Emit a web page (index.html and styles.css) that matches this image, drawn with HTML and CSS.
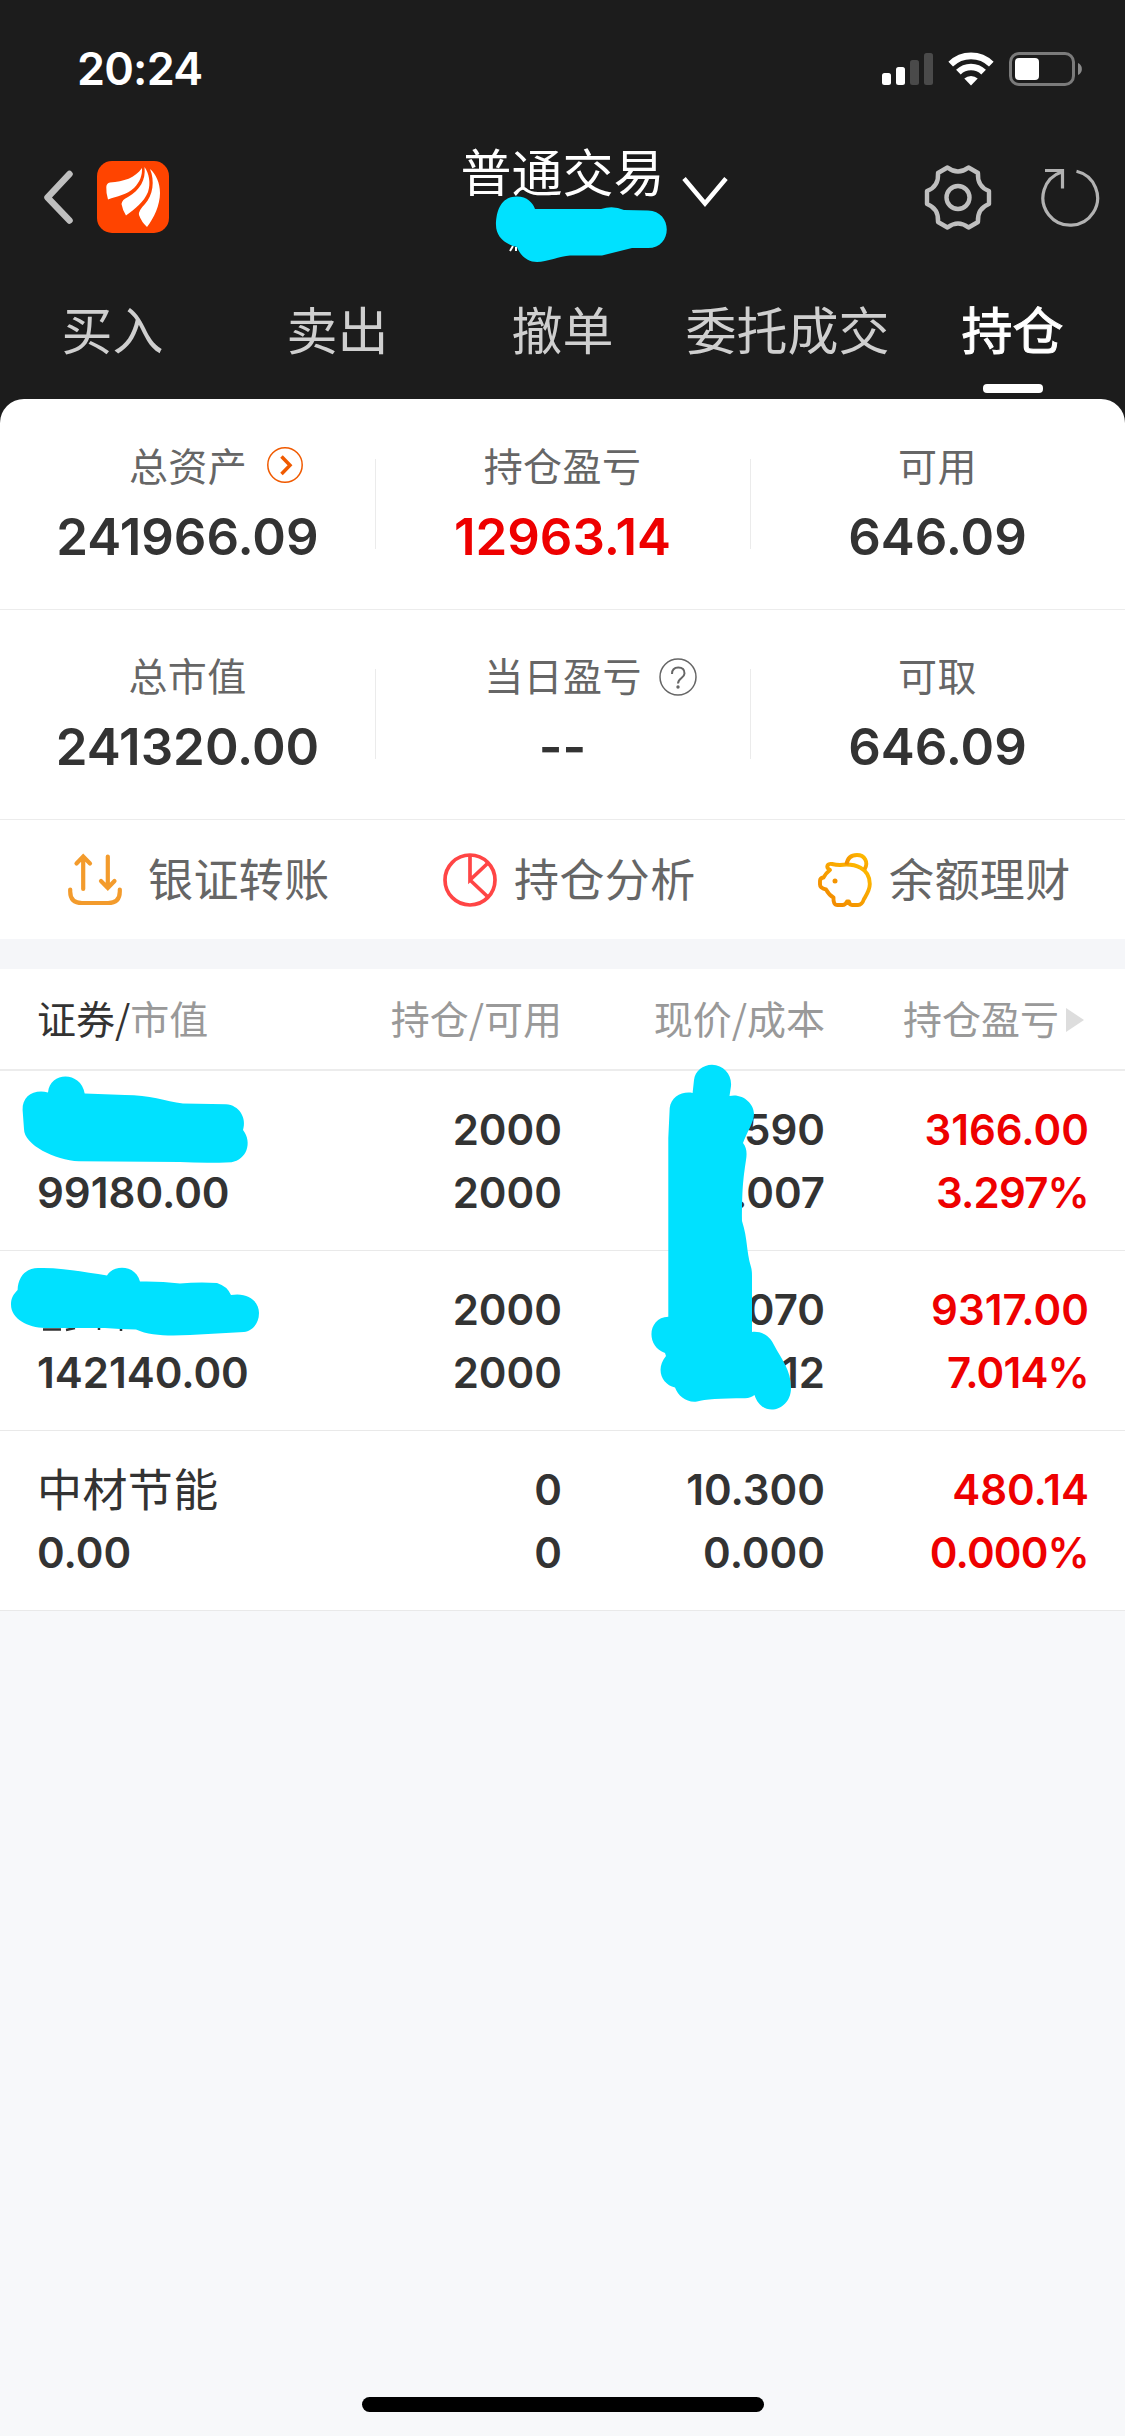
FILE: index.html
```html
<!DOCTYPE html>
<html lang="zh-CN">
<head>
    <meta charset="utf-8">
    <title>普通交易</title>
    <link rel="stylesheet" href="styles.css">
</head>

<body>
    <header>
        <div class="status">
            <div class="time">20:24</div>
            <svg class="signal" width="51" height="34" viewBox="0 0 51 34">
                <g fill="#fff">
                    <rect x="0" y="21" width="9" height="12" rx="2.5"/>
                    <rect x="14" y="15" width="9" height="18" rx="2.5"/>
                </g>
                <g fill="#4a4a4a">
                    <rect x="28" y="8" width="9" height="25" rx="2.5"/>
                    <rect x="42" y="1" width="9" height="32" rx="2.5"/>
                </g>
            </svg>
            <svg class="wifi" width="46" height="34" viewBox="0 0 46 34">
                <g fill="none" stroke="#fff" stroke-width="6.6">
                    <path d="M2.7 12.2a29 29 0 0 1 40.6 0"/>
                    <path d="M10.4 20.2a18 18 0 0 1 25.2 0"/>
                </g>
                <path d="M23 33.4l-6.7-6.8a9.6 9.6 0 0 1 13.4 0z" fill="#fff"/>
            </svg>
            <svg class="battery" width="74" height="34" viewBox="0 0 74 34">
                <rect x="1.5" y="1.5" width="63" height="31" rx="8.5" fill="none" stroke="#7b7b7b" stroke-width="3"/>
                <rect x="6" y="6" width="24" height="22" rx="4" fill="#fff"/>
                <path d="M69 11v12a6.6 6.6 0 0 0 0-12z" fill="#8a8a8a"/>
            </svg>
        </div>

        <div class="navbar">
            <div class="nav-left">
                <svg width="32" height="54" viewBox="0 0 32 54"><path d="M27.500 4L5.500 27.500l22 23" fill="none" stroke="#bfbfbf" stroke-width="6.500" stroke-linecap="round" stroke-linejoin="round"/></svg>
                <svg class="logo" width="72" height="72" viewBox="0 0 72 72">
                    <rect width="72" height="72" rx="15" fill="#ff4400"/>
                    <g fill="#fff">
                        <path d="M45 7C38 17 27 20.500 13 21.500Q9.500 22 9.300 26Q9 32 11 38.500C20 35 30 34 37 27C43 21 45.500 14 45 7z"/>
                        <path d="M47.500 6C49 19 43 29 31 36Q25 38.500 24.500 43Q25.500 49 29 54.500C38 48 47 41 51 31C54 22 52 12 47.500 6z"/>
                        <path d="M53 8C58 20 56 34 48 43Q41 50 42 54Q44.500 61 50 66C57 57 63 44 63 32C63 22 59 13 53 8z"/>
                    </g>
                </svg>
            </div>
            <div class="title">普通交易</div>
            <div class="nav-right">
                <svg class="arrow" width="46" height="32" viewBox="0 0 46 32"><path d="M2 2.500L23 27.500 44 2.500" fill="none" stroke="#fff" stroke-width="4.500"/></svg>
                <svg class="gear" width="68" height="68" viewBox="0 0 68 68">
                    <g fill="none" stroke="#bfbfbf" stroke-width="4.400" stroke-linejoin="round">
                        <path d="M23.500 4.500Q34 12.500 44.500 4.500L54 10Q53 23.500 65 28V41Q53 45.500 54 59L44.500 64.500Q34 56.500 23.500 64.500L14 59Q15 45.500 3 41V28Q15 23.500 14 10z"/>
                        <circle cx="34" cy="34.500" r="11.500"/>
                    </g>
                </svg>
                <svg class="refresh" width="60" height="64" viewBox="0 0 60 64">
                    <path d="M36.500 6.300A27.300 27.300 0 1 1 21.500 7M5 5.500H22.500V23.500" fill="none" stroke="#b2b2b2" stroke-width="3.200"/>
                </svg>
            </div>
        </div>

        <div class="tabs">
            <div>买入</div>
            <div>卖出</div>
            <div>撤单</div>
            <div>委托成交</div>
            <div class="active">持仓</div>
        </div>
    </header>

    <main>
        <section class="summary">
            <div class="cell">
                <div class="label">总资产<svg class="go" width="36" height="36" viewBox="0 0 36 36"><g fill="none" stroke="#f05a00"><circle cx="18" cy="18" r="17.200" stroke-width="1.500"/><path d="M14.500 9.500L23 18.300 14.500 27" stroke-width="3.500"/></g></svg></div>
                <div class="value">241966.09</div>
            </div>
            <div class="cell">
                <div class="label">持仓盈亏</div>
                <div class="value red">12963.14</div>
            </div>
            <div class="cell">
                <div class="label">可用</div>
                <div class="value">646.09</div>
            </div>
        </section>
        <section class="summary">
            <div class="cell">
                <div class="label">总市值</div>
                <div class="value">241320.00</div>
            </div>
            <div class="cell">
                <div class="label">当日盈亏<svg class="help" width="38" height="38" viewBox="0 0 38 38"><g fill="none" stroke="#666"><circle cx="19" cy="19" r="18" stroke-width="1.500"/><path d="M13 16Q13 9.500 19.300 9.500T25.500 15.500C25.500 20 19 20 19 25.500" stroke-width="2"/></g><circle cx="19" cy="29" r="1.700" fill="#666"/></svg></div>
                <div class="value">--</div>
            </div>
            <div class="cell">
                <div class="label">可取</div>
                <div class="value">646.09</div>
            </div>
        </section>

        <section class="actions">
            <div class="transfer">
                <svg width="54" height="54" viewBox="0 0 54 54">
                    <g fill="none" stroke="#f39b2c" stroke-width="4.200" stroke-linecap="round">
                        <path d="M2.200 36.500V38.500Q2.200 50 14 50H40Q51.800 50 51.800 38.500V36.500"/>
                        <path d="M15.200 36V4M8.500 10.500L15.200 3.500 22 10.500M39.800 3.500V35M33 28L39.800 35 46.500 28"/>
                    </g>
                </svg>
                <span>银证转账</span>
            </div>
            <div>
                <svg width="54" height="54" viewBox="0 0 54 54">
                    <g fill="none" stroke="#ff4545" stroke-width="3.700">
                        <circle cx="27" cy="27" r="25"/>
                        <path d="M27 2V27L45 10M27 27L45.500 44.500"/>
                    </g>
                </svg>
                <span>持仓分析</span>
            </div>
            <div>
                <svg width="54" height="54" viewBox="0 0 54 54">
                    <linearGradient id="pig" x1="0" y1="1" x2="1" y2="0">
                        <stop offset="0" stop-color="#f08300"/>
                        <stop offset="1" stop-color="#ffbe00"/>
                    </linearGradient>
                    <g fill="none" stroke="url(#pig)" stroke-width="3.900" stroke-linejoin="round">
                        <path d="M9.500 12.500Q10.500 10.500 14 11Q18 12 22 12C37 10 51.800 15 51.800 31C51.800 37 49 41 46 46Q44 52 40 52H34Q31.500 52 31 48.500H29Q27.500 52 24.500 52H19.500Q15 52 15.500 44.500Q11 42 8 36.500Q2 35 2 31.500V28Q2 25 5.500 24.500Q8 20 12 17Q8.500 15 9.500 12.500z"/>
                        <path d="M28.500 11.500C29.500 4.500 34 2 39 2C46.500 2 51 9 46.500 16.500"/>
                    </g>
                    <circle cx="17" cy="28" r="2.500" fill="#f49400"/>
                </svg>
                <span>余额理财</span>
            </div>
        </section>

        <section class="holdings">
            <div class="row head">
                <div><b>证券/</b>市值</div>
                <div>持仓/可用</div>
                <div>现价/成本</div>
                <div class="sort">持仓盈亏</div>
            </div>
            <div class="row">
                <div><p class="name"></p><p>99180.00</p></div>
                <div><p>2000</p><p>2000</p></div>
                <div><p>.590</p><p>.007</p></div>
                <div class="red"><p>3166.00</p><p class="percent">3.297%</p></div>
            </div>
            <div class="row">
                <div><p class="name"></p><p>142140.00</p></div>
                <div><p>2000</p><p>2000</p></div>
                <div><p>070</p><p>12</p></div>
                <div class="red"><p>9317.00</p><p class="percent">7.014%</p></div>
            </div>
            <div class="row">
                <div><p class="name">中材节能</p><p>0.00</p></div>
                <div><p>0</p><p>0</p></div>
                <div><p>10.300</p><p>0.000</p></div>
                <div class="red"><p>480.14</p><p class="percent">0.000%</p></div>
            </div>
        </section>
    </main>

    <div class="home-bar"></div>

    <!-- marker strokes over the private data -->
    <svg class="marker" width="1125" height="1420" viewBox="0 0 1125 1420">
        <path d="M513 246L510 251M516 247V251" stroke="#fff" stroke-width="2"/>
        <path d="M43 1329.500H61M66 1330L75 1328M99 1327V1330M121 1328V1331" stroke="#333" stroke-width="2.500"/>
        <g fill="#00e1ff">
            <path d="M496 225C496 213 500 196.500 517 196.500C527 196.500 533 203 535 209H601Q613 205 624 210L648 210.500C673 211 673 248 648 248H632L602 255.500H570C560 256 547 262 537 262C527 262 520 255 517 247C504 244 496 236 496 225z"/>
            <path d="M22.600 1110C22 1096 34 1089 48 1092.500C50 1071 81 1071 84.700 1093.500L125 1095C150 1095 165 1101 183 1103.600L226 1104.300C239 1105 247 1118 243 1130C253 1143 246 1160 231.600 1162.200Q205 1163.500 180 1162L79 1161.300C55 1160 24 1145 24 1129z"/>
            <path d="M17.600 1290C18 1275 28 1267 40 1268C60 1267.500 85 1272 107 1275.500C114 1264 136 1265 140 1281.500Q160 1281 180 1283.500Q198 1282 217 1283Q227 1286 231 1295C249 1292 259 1302 259 1313C259 1324 252 1331 244 1332L190 1335C170 1336 150 1336 136 1329.500Q120 1329 105 1328H45C28 1328 11 1319 11 1304.600C11 1298 13 1295 17.600 1290z"/>
            <path d="M712 1064.800C724 1065 732 1075 731 1086L729.500 1096C742 1093 754 1103 754 1114C754 1122 747 1132 743 1143C747 1148 747 1154 746 1160C743 1180 742 1190 742 1221C748 1240 746 1250 751 1267Q752 1270 752 1276V1332C762 1331 770 1336 774 1345C782 1360 791 1370 791 1388C791 1411 762 1419 754.500 1395Q751 1398 745 1398.200C720 1398.200 705 1399 697 1401.500C687 1403 678 1396 675 1387.500C662 1385 655 1369 666 1356L665 1353C645 1346 648 1317 668.300 1316.700V1138L669.700 1108C671 1097 682 1091 692.600 1093L694 1080C695 1071 703 1065 712 1064.800z"/>
        </g>
    </svg>
</body>
</html>
```
FILE: styles.css
```css
* {
    box-sizing: border-box;
}

body {
    position: relative;
    display: flex;
    flex-direction: column;
    height: 2436px;
    width: 1125px;
    margin: 0;
    background-color: #f7f8fa;
    font-family: Inter, "Noto Sans CJK SC", sans-serif;
    color: #333;
    overflow: hidden;
}

svg {
    display: block;
    flex: none;
}

p {
    margin: 0;
}

header {
    height: 424px;
    flex: none;
    background-color: #1c1c1c;
}

.status {
    display: flex;
    align-items: center;
    height: 137px;
    padding: 1px 42px 0 77px;
}

.time {
    font-size: 45px;
    font-weight: 600;
    letter-spacing: -0.8px;
    line-height: 56px;
    color: #fff;
    margin-right: auto;
}

.wifi {
    margin: 0 15px;
}

.navbar {
    display: grid;
    grid-template-columns: 1fr auto 1fr;
    height: 120px;
    align-items: center;
}

.nav-left {
    display: flex;
    align-items: center;
    gap: 23px;
    padding-left: 42px;
}

.title {
    font-size: 51px;
    line-height: 60px;
    margin-bottom: 54px;
    color: #fff;
    font-family: "Noto Sans CJK SC", sans-serif;
}

.nav-right {
    display: flex;
    align-items: center;
    padding-left: 17px;
}

.arrow {
    margin-top: -11px;
}

.gear {
    margin-left: 196px;
}

.refresh {
    margin-left: 48px;
}

.tabs {
    display: grid;
    grid-template-columns: repeat(5, 1fr);
    height: 142px;
    font-family: "Noto Sans CJK SC", sans-serif;
    font-size: 51px;
    line-height: 60px;
    padding-top: 41px;
    text-align: center;
    color: #cfcfcf;
}

/* a touch heavier than regular */
.tabs .active {
    color: #fff;
    -webkit-text-stroke: 1px #fff;
}

.tabs .active::after {
    content: "";
    display: block;
    width: 60px;
    height: 9px;
    margin: 26px auto 0;
    border-radius: 4px;
    background-color: #fff;
}

main {
    margin-top: -25px;
    border-radius: 24px 24px 0 0;
    background-color: #fff;
}

.summary {
    display: grid;
    grid-template-columns: repeat(3, 1fr);
    height: 211px;
    padding-top: 45px;
    border-bottom: 1px solid #ececec;
    text-align: center;
}

.summary + .summary {
    height: 210px;
    padding-top: 44px;
}

.cell {
    height: 120px;
}

.cell + .cell {
    background: linear-gradient(#ebebeb, #ebebeb) left 15px / 1px 90px no-repeat;
}

.label {
    display: flex;
    justify-content: center;
    align-items: center;
    height: 45px;
    margin-top: -3px;
    font-size: 39px;
    letter-spacing: 0.4px;
    color: #666;
}

.go {
    margin: 3px -57px 0 20px;
}

.help {
    margin: 6px -56px 0 17px;
}

.value {
    font-size: 51px;
    font-weight: 600;
    line-height: 60px;
    margin-top: 21px;
}

.red, .red p {
    color: #ee0000;
}

.actions {
    display: grid;
    grid-template-columns: repeat(3, 1fr);
    height: 119px;
    font-size: 45px;
    letter-spacing: 0.4px;
    color: #666;
}

.actions div {
    display: flex;
    align-items: center;
    gap: 17px;
    padding-left: 68px;
}

.actions .transfer {
    gap: 26px;
}

.actions span {
    margin-top: -5px;
}

.holdings {
    border-top: 30px solid #f5f6f9;
}

.row {
    display: grid;
    grid-template-columns: 325px 200px 263px 264px;
    height: 180px;
    padding: 27px 36px 0 37px;
    border-bottom: 1px solid #e9e9e9;
    text-align: right;
    font-size: 42px;
    font-weight: 600;
    line-height: 63px;
}

.row div:first-child {
    text-align: left;
}

.row .name {
    height: 63px;
    padding-top: 1px;
    font-size: 45px;
    font-weight: 400;
    letter-spacing: 0.4px;
}

.percent {
    letter-spacing: -0.8px;
}

.row.head {
    height: 102px;
    padding-top: 17px;
    border-bottom: 2px solid #ececec;
    font-size: 39px;
    font-weight: 400;
    color: #999;
    font-family: "Noto Sans CJK SC", sans-serif;
}

.head b {
    font-weight: 400;
    color: #333;
}

.sort {
    display: flex;
    justify-content: flex-end;
    align-items: center;
    height: 63px;
}

.sort::after {
    content: "";
    margin: 5px 5px 0 7px;
    border: 12px solid transparent;
    border-left: 18px solid #ddd;
    border-right: 0;
}

.home-bar {
    width: 402px;
    height: 15px;
    margin: auto auto 24px;
    border-radius: 8px;
    background-color: #000;
}

.marker {
    position: absolute;
    top: 0;
    left: 0;
}
```
